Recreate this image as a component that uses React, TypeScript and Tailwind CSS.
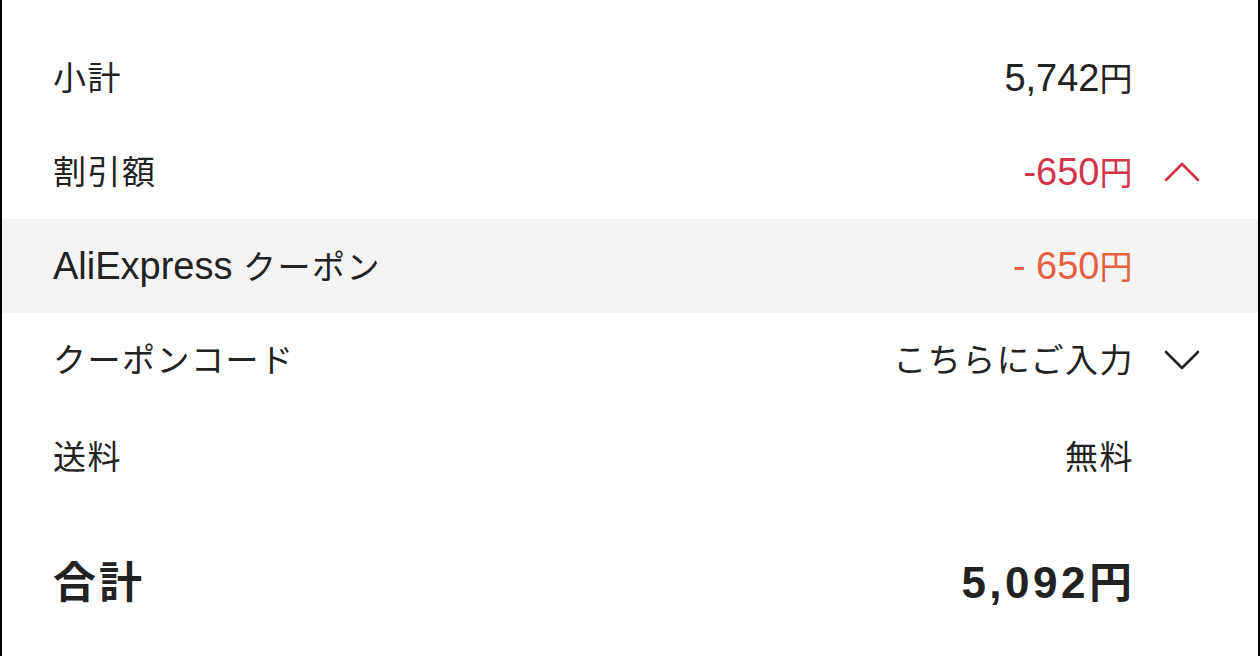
import React from "react";

const font = { fontFamily: '"Liberation Sans", "Noto Sans CJK JP", sans-serif' };

function Mixed({ text, latin, cjk }: { text: string; latin: string; cjk: string }) {
  const parts = text.split(/([\u3000-\u30ff\u4e00-\u9fff]+)/).filter((p) => p.length > 0);
  return (
    <>
      {parts.map((p, i) =>
        /[\u3000-\u30ff\u4e00-\u9fff]/.test(p) ? (
          <span key={i} className={cjk}>
            {p}
          </span>
        ) : (
          <span key={i} className={latin}>
            {p}
          </span>
        )
      )}
    </>
  );
}

function Chevron({ up, color }: { up?: boolean; color: string }) {
  return (
    <svg width="36" height="22" viewBox="0 0 36 22" fill="none" className="shrink-0">
      <path
        d={up ? "M2 19 L18 3 L34 19" : "M2 3 L18 19 L34 3"}
        stroke={color}
        strokeWidth="2.6"
        strokeLinecap="round"
        strokeLinejoin="round"
      />
    </svg>
  );
}

const LATIN = "text-[38px] tracking-[0px]";
const CJK = "text-[33px] tracking-[1.5px]";

function Row({
  label,
  value,
  valueClass = "text-[#222222]",
  gray,
  chevron,
  extra = "",
}: {
  label: string;
  value: string;
  valueClass?: string;
  gray?: boolean;
  chevron?: React.ReactNode;
  extra?: string;
}) {
  return (
    <div
      className={`flex h-[94px] shrink-0 items-center pl-[51px] pr-[58px] ${gray ? "bg-[#f4f4f4]" : ""} ${extra}`}
    >
      <div className="flex-1 leading-none text-[#222222]">
        <Mixed text={label} latin={LATIN} cjk={CJK} />
      </div>
      <div className={`leading-none ${valueClass}`}>
        <Mixed text={value} latin={LATIN} cjk={CJK} />
      </div>
      <div className="flex w-[66px] justify-end">{chevron}</div>
    </div>
  );
}

export default function App() {
  return (
    <div className="h-[656px] w-[1260px] overflow-hidden bg-white" style={font}>
      <div className="flex h-full flex-col border-x-2 border-black pt-[31px]">
        <Row label="小計" value="5,742円" />
        <Row
          label="割引額"
          value="-650円"
          valueClass="text-[#d2334a]"
          chevron={<Chevron up color="#d2334a" />}
        />
        <Row label="AliExpress クーポン" value="- 650円" valueClass="text-[#e5603e]" gray />
        <Row label="クーポンコード" value="こちらにご入力" chevron={<Chevron color="#222222" />} />
        <Row label="送料" value="無料" extra="pt-[6px]" />
        <div className="flex h-[164px] shrink-0 items-center pl-[51px] pr-[58px] font-bold text-[#222222]">
          <div className="flex-1 text-[43px] leading-none tracking-[3px]">合計</div>
          <div className="leading-none">
            <span className="text-[44px] tracking-[3.5px]">5,092</span>
            <span className="text-[43px] tracking-[3px]">円</span>
          </div>
          <div className="w-[65px]" />
        </div>
      </div>
    </div>
  );
}
